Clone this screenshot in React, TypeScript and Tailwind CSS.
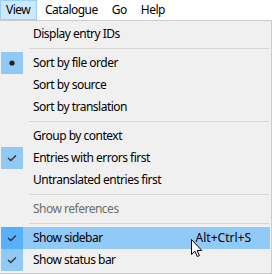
type Item = {
  label: string;
  mark?: "check" | "dot";
  disabled?: boolean;
  hover?: boolean;
  shortcut?: string;
};

const groups: Item[][] = [
  [{ label: "Display entry IDs" }],
  [
    { label: "Sort by file order", mark: "dot" },
    { label: "Sort by source" },
    { label: "Sort by translation" },
  ],
  [
    { label: "Group by context" },
    { label: "Entries with errors first", mark: "check" },
    { label: "Untranslated entries first" },
  ],
  [{ label: "Show references", disabled: true }],
  [
    { label: "Show sidebar", mark: "check", hover: true, shortcut: "Alt+Ctrl+S" },
    { label: "Show status bar", mark: "check" },
  ],
];

function Mark({ kind }: { kind: "check" | "dot" }) {
  if (kind === "dot")
    return (
      <svg width="8" height="8" viewBox="0 0 8 8">
        <circle cx="4" cy="4" r="2.6" fill="#222" />
      </svg>
    );
  return (
    <svg width="10" height="8" viewBox="0 0 10 8">
      <path d="M1 4 L3.8 6.6 L9 1.4" fill="none" stroke="#333" strokeWidth="1.4" />
    </svg>
  );
}

function Row({ item }: { item: Item }) {
  return (
    <div className={`flex h-[22px] items-center ${item.hover ? "bg-[#91c9f7]" : ""}`}>
      <div
        className={`flex h-[22px] w-[22px] items-center justify-center ${
          item.mark ? (item.hover ? "bg-[#56b0fa]" : "bg-[#90c8f6]") : ""
        }`}
      >
        {item.mark && <Mark kind={item.mark} />}
      </div>
      <span className={`ml-[10px] ${item.disabled ? "text-[#6d6d6d]" : "text-black"}`}>{item.label}</span>
      {item.shortcut && (
        <span className="ml-auto mr-[19px] tracking-normal text-black">{item.shortcut}</span>
      )}
    </div>
  );
}

export default function App() {
  return (
    <div className="relative h-[275px] w-[272px] overflow-hidden bg-white font-['Noto_Sans',sans-serif] text-[12px] leading-none tracking-[-0.5px]">
      <div className="flex h-[20px] items-center text-black">
        <div className="flex h-[20px] w-[37px] items-center border border-[#99d1ff] bg-[#cce8ff] pl-[5px]">View</div>
        <div className="pl-[8px] pr-[7px]">Catalogue</div>
        <div className="px-[7px]">Go</div>
        <div className="px-[7px]">Help</div>
      </div>
      <div className="w-[272px] border-t border-r border-b border-[#cccccc] bg-[#f0f0f0] py-[2px] pl-[1px] pr-[1px]">
        {groups.map((g, gi) => (
          <div key={gi}>
            {gi > 0 && (
              <div className="flex h-[7px] items-center pl-[28px] pr-[1px]">
                <div className="h-px w-full bg-[#d7d7d7]" />
              </div>
            )}
            {g.map((item) => (
              <Row key={item.label} item={item} />
            ))}
          </div>
        ))}
      </div>
      <svg className="absolute left-[191px] top-[239px]" width="12" height="19" viewBox="0 0 12 19">
        <path d="M0.5 0.5 L0.5 15.5 L4 12.2 L6.3 17.5 L8.4 16.6 L6.2 11.5 L10.8 11.5 Z" fill="#fff" stroke="#000" strokeWidth="1" />
      </svg>
    </div>
  );
}
